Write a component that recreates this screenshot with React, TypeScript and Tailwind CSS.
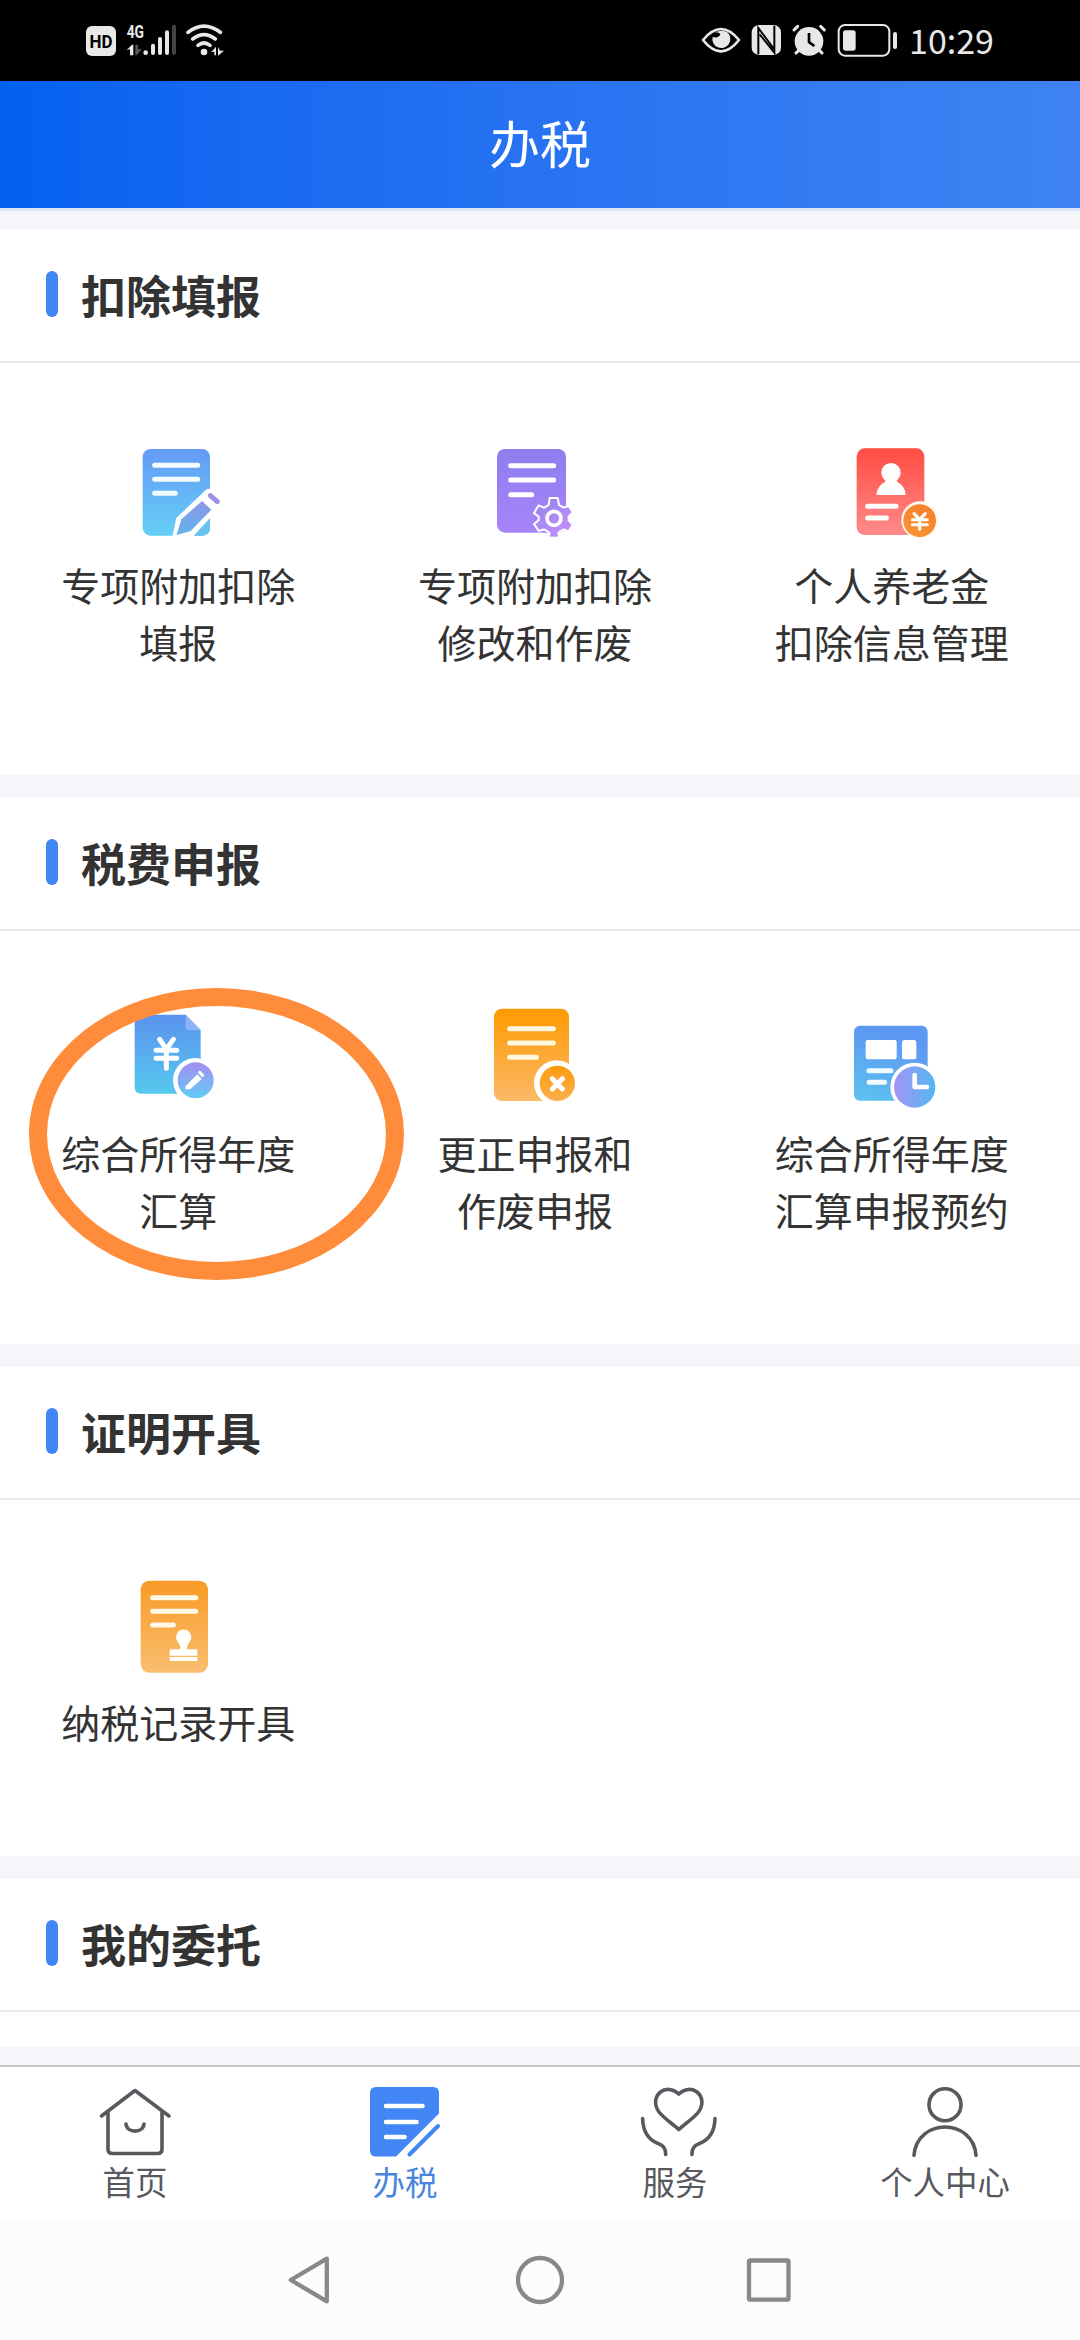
import clsx from "clsx";
import type { ReactNode } from "react";

type Item = {
	icon: ReactNode;
	lines: string[];
};

function Gradient({ id, from, to, x2 = 0, y2 = 1 }: { id: string; from: string; to: string; x2?: number; y2?: number }) {
	return (
		<linearGradient id={id} x1="0" y1="0" x2={x2} y2={y2}>
			<stop offset="0" stopColor={from} />
			<stop offset="1" stopColor={to} />
		</linearGradient>
	);
}

function ItemSvg({ viewBox, children }: { viewBox: string; children: ReactNode }) {
	return (
		<svg className="h-[120px] w-[120px]" viewBox={viewBox} fill="none" strokeLinecap="round" strokeLinejoin="round">
			{children}
		</svg>
	);
}

const FillIcon = () => (
	<ItemSvg viewBox="237 12 360 360">
		<defs>
			<Gradient id="fill-doc" from="#639af6" to="#66cff6" />
			<Gradient id="fill-pen" from="#8f95e6" to="#5fb4ee" />
		</defs>
		<rect x="311" y="57" width="202" height="260" rx="24" fill="url(#fill-doc)" />
		<path d="M347 106H476M347 148H476M347 190H409" stroke="#f4fdff" strokeWidth="15" />
		<path d="M400 320 L412 264 L500 180 Q510 172 519 180 L549 210 L549 232 L463 320 Z" fill="#fff" />
		<path d="M513 264 V300 Q510 314 490 317 H464 Z" fill="#64c4ee" />
		<path d="M489 213 L517 239 L455 303 L413 315 L427 268 Z" fill="url(#fill-pen)" />
		<path d="M514 197 L535 215" stroke="#9a94e0" strokeWidth="15" />
	</ItemSvg>
);

const ModifyIcon = () => (
	<ItemSvg viewBox="225 12 360 360">
		<defs>
			<Gradient id="mod-doc" from="#8d7eee" to="#a884fb" />
			<Gradient id="mod-gear" from="#8f86ee" to="#c08df8" x2={0.6} />
		</defs>
		<rect x="291" y="57" width="207" height="251" rx="24" fill="url(#mod-doc)" />
		<path d="M332 107H461M332 150H461M332 194H395" stroke="#fff" strokeWidth="15" />
		<path
			d="M449 204H473L477 225L491 233L506 228L518 247L506 259V272L518 284L506 304L491 298L477 306L473 318H451L446 306L432 298L416 303L402 282L416 271V260L402 249L416 226L432 233L446 225Z"
			fill="url(#mod-gear)"
			stroke="#fff"
			strokeWidth="6"
		/>
		<path d="M450 317H474" stroke="#b78df3" strokeWidth="6" strokeLinecap="butt" />
		<circle cx="462" cy="265" r="21" stroke="#fff" strokeWidth="11" />
	</ItemSvg>
);

const PensionIcon = () => (
	<ItemSvg viewBox="215 12 360 360">
		<defs>
			<Gradient id="pen-doc" from="#ff4c42" to="#ff8b89" />
			<Gradient id="pen-coin" from="#f6842c" to="#fb9f35" x2={-0.5} />
		</defs>
		<rect x="289" y="55" width="203" height="260" rx="24" fill="url(#pen-doc)" />
		<circle cx="392" cy="128" r="29" fill="#fff" />
		<path d="M376 148H408L411 156Q434 167 436 195H348Q351 167 374 156Z" fill="#fff" />
		<path d="M322 229H407M322 264H378" stroke="#fff" strokeWidth="15" />
		<circle cx="479" cy="270" r="56" fill="#fffaf0" />
		<circle cx="478" cy="272" r="49" fill="url(#pen-coin)" />
		<path d="M461 251L478 268L495 251M456 269H501M456 284H501M478 268V298" stroke="#fff" strokeWidth="9" />
	</ItemSvg>
);

const AnnualIcon = () => (
	<ItemSvg viewBox="295 96 360 360">
		<defs>
			<Gradient id="ann-doc" from="#5b93ef" to="#56c8ee" />
			<Gradient id="ann-badge" from="#a58df2" to="#5fccf4" />
		</defs>
		<path d="M365 134H498L543 180V371H365Q345 371 345 351V154Q345 134 365 134Z" fill="url(#ann-doc)" />
		<path d="M498 136L543 180H507Q498 180 498 171Z" fill="#8db4f6" />
		<path d="M420 208L440 238L461 208M409 241H471M409 265H471M440 238V295" stroke="#fff" strokeWidth="15" />
		<circle cx="527" cy="331" r="67" fill="#fff" />
		<circle cx="528" cy="331" r="54" fill="url(#ann-badge)" />
		<path d="M499 348L533 314L545 327L511 357L499 357Z" fill="#fff" stroke="#fff" strokeWidth="2" />
		<path d="M540 307L549 316" stroke="#fff" strokeWidth="9" />
	</ItemSvg>
);

const CorrectIcon = () => (
	<ItemSvg viewBox="135 36 360 360">
		<defs>
			<Gradient id="cor-doc" from="#ff9a02" to="#fcb968" />
			<Gradient id="cor-badge" from="#fd9a0c" to="#fbb14e" />
		</defs>
		<rect x="192" y="56" width="225" height="277" rx="24" fill="url(#cor-doc)" />
		<path d="M239 116H370M239 159H370M239 202H319" stroke="#fff8e0" strokeWidth="15" />
		<circle cx="380" cy="279" r="68" fill="#fff" />
		<circle cx="382" cy="280" r="53" fill="url(#cor-badge)" />
		<path d="M367 266L397 297M397 266L367 297" stroke="#fff" strokeWidth="15" />
	</ItemSvg>
);

const BookingIcon = () => (
	<ItemSvg viewBox="215 36 360 360">
		<defs>
			<Gradient id="book-doc" from="#5d99f2" to="#5cc6f0" x2={-0.3} />
			<Gradient id="book-clock" from="#a494f5" to="#52b7f2" x2={1} y2={0} />
		</defs>
		<rect x="281" y="107" width="221" height="225" rx="18" fill="url(#book-doc)" />
		<rect x="316" y="150" width="93" height="58" rx="6" fill="#fff" />
		<rect x="425" y="150" width="43" height="58" rx="8" fill="#fff" />
		<path d="M326 242H392M326 277H373" stroke="#f0fbff" strokeWidth="15" />
		<circle cx="463" cy="291" r="73" fill="#fff" />
		<circle cx="463" cy="291" r="62" fill="url(#book-clock)" />
		<path d="M463 255V291H500" stroke="#fff" strokeWidth="14" />
	</ItemSvg>
);

const RecordIcon = () => (
	<ItemSvg viewBox="295 93 360 360">
		<defs>
			<Gradient id="rec-doc" from="#f99a26" to="#f9be70" />
		</defs>
		<rect x="363" y="122" width="202" height="276" rx="26" fill="url(#rec-doc)" />
		<path d="M399 173H528M399 214H528M399 255H461" stroke="#fff8e6" strokeWidth="15" />
		<path d="M482 328Q484 318 476 308A23 23 0 1 1 508 308Q500 318 502 328H533V347H450V328Z" fill="#fff" />
		<rect x="450" y="351" width="83" height="12" fill="#fff" />
	</ItemSvg>
);

const sections: { title: string; className: string; circled?: boolean; items: Item[] }[] = [
	{
		title: "扣除填报",
		className: "h-[568px] border-b-[23px]",
		items: [
			{ icon: <FillIcon />, lines: ["专项附加扣除", "填报"] },
			{ icon: <ModifyIcon />, lines: ["专项附加扣除", "修改和作废"] },
			{ icon: <PensionIcon />, lines: ["个人养老金", "扣除信息管理"] },
		],
	},
	{
		title: "税费申报",
		className: "h-[569px] border-b-[23px]",
		circled: true,
		items: [
			{ icon: <AnnualIcon />, lines: ["综合所得年度", "汇算"] },
			{ icon: <CorrectIcon />, lines: ["更正申报和", "作废申报"] },
			{ icon: <BookingIcon />, lines: ["综合所得年度", "汇算申报预约"] },
		],
	},
	{
		title: "证明开具",
		className: "h-[512px] border-b-[23px]",
		items: [{ icon: <RecordIcon />, lines: ["纳税记录开具"] }],
	},
	{ title: "我的委托", className: "h-[186px] border-b-[18px]", items: [] },
];

function StatusBar() {
	return (
		<div className="flex h-[81px] shrink-0 items-start justify-between bg-black pt-5 pr-[86px] pl-20 text-[#e8e8e8]">
			<svg className="h-10 w-[150px]" viewBox="60 60 450 120" fill="currentColor" strokeLinecap="round">
				<rect x="78" y="78" width="90" height="90" rx="18" />
				<text x="123" y="144" fontSize="56" fontWeight="700" textAnchor="middle" textLength="69" lengthAdjust="spacingAndGlyphs" className="fill-black font-['Roboto',sans-serif]">
					HD
				</text>
				<text x="200" y="114" fontSize="55" fontWeight="700" textLength="52" lengthAdjust="spacingAndGlyphs" className="font-['Roboto',sans-serif]">
					4G
				</text>
				<path d="M200 150L216 134H220V166H210V148Z" />
				<path d="M226 134H234V148L246 146L230 166H226Z" fill="#555" />
				<circle cx="257" cy="158" r="7" />
				<path d="M279 137V159M300 117V159M321 97V159" stroke="currentColor" strokeWidth="12" />
				<path d="M342 80V159" stroke="#444" strokeWidth="12" />
				<g fill="none" stroke="currentColor" strokeWidth="11">
					<path d="M384 97Q432 60 481 97" />
					<path d="M398 117Q432 91 466 117" />
					<path d="M414 136Q432 122 450 136" />
				</g>
				<circle cx="432" cy="156" r="10" />
				<path d="M454 156L468 140V166H463V156ZM474 140L480 152H492L474 167Z" />
			</svg>
			<div className="flex items-start">
				<svg className="h-10 w-[50px]" viewBox="60 60 150 120" fill="none">
					<path d="M69 120Q123 54 177 120Q123 188 69 120Z" stroke="currentColor" strokeWidth="8" strokeLinejoin="round" />
					<path d="M104 97Q118 96 121 104Q112 117 98 110A27 27 0 1 0 142 97Q128 88 104 97Z" fill="currentColor" />
				</svg>
				<svg className="h-10 w-10" viewBox="210 60 120 120">
					<rect x="215" y="75" width="88" height="90" rx="22" fill="currentColor" />
					<path d="M235 163V84L281 146M239 103L283 158V77" fill="none" stroke="#000" strokeWidth="6" />
				</svg>
				<svg className="h-10 w-[45px]" viewBox="330 60 135 120" fill="none" stroke="currentColor" strokeLinecap="round">
					<circle cx="387" cy="124" r="43" fill="currentColor" stroke="none" />
					<path d="M342 90L353 79M433 90L422 79M356 152L348 159M419 152L426 159" strokeWidth="9" />
					<path d="M387 99V126L403 138" stroke="#000" strokeWidth="8" strokeLinecap="butt" />
				</svg>
				<svg className="h-10 w-[67px]" viewBox="465 60 201 120" fill="currentColor">
					<rect x="476" y="75" width="152" height="92" rx="19" fill="none" stroke="currentColor" strokeWidth="6" />
					<rect x="489" y="91" width="38" height="61" rx="8" />
					<rect x="639" y="96" width="12" height="51" rx="6" />
				</svg>
				<span className="mt-[-5px] ml-[7px] text-[34px] leading-[50px] whitespace-nowrap">10:29</span>
			</div>
		</div>
	);
}

function Section({ title, className, circled, items }: (typeof sections)[number]) {
	return (
		<section className={clsx("relative shrink-0 border-[#f5f6fa] bg-white", className)}>
			<div className="flex h-[133px] items-center border-b-2 border-[#ebebeb] pl-[46px]">
				<span className="mt-[-3px] h-[46px] w-3 rounded-full bg-[#4285f4]" />
				<h2 className="mt-[-2px] ml-[23px] text-[45px] leading-none font-bold">{title}</h2>
			</div>
			<div className="grid w-[1070px] grid-cols-3 pt-[71px]">
				{items.map((item) => (
					<div key={item.lines.join("")} className="flex flex-col items-center">
						{item.icon}
						<p className="mt-[2px] text-center text-[39px] leading-[57px]">
							{item.lines.map((line) => (
								<span key={line} className="block whitespace-nowrap">
									{line}
								</span>
							))}
						</p>
					</div>
				))}
			</div>
			{circled && (
				<div className="absolute top-[190px] left-[29px] h-[292px] w-[375px] rounded-[50%] border-[18px] border-[#ff8c3a]" />
			)}
		</section>
	);
}

function TabItem({ label, active, children }: { label: string; active?: boolean; children: ReactNode }) {
	return (
		<div className={clsx("flex flex-col items-center", active ? "text-[#4a86dc]" : "text-[#58585e]")}>
			<svg className="h-20 w-24" viewBox="0 0 96 80" fill="none" stroke="currentColor" strokeWidth="3.6" strokeLinecap="round" strokeLinejoin="round">
				{children}
			</svg>
			<span className="mt-[-1px] text-[32.4px] leading-[44px]">{label}</span>
		</div>
	);
}

function TabBar() {
	return (
		<nav className="grid h-[157px] shrink-0 grid-cols-4 border-t-2 border-[#c6c7ca] bg-white pt-[13px]">
			<TabItem label="首页">
				<path d="M14.5 36L48 10.5L82 36M21 32V69Q21 73.5 25.5 73.5H70.5Q75 73.5 75 69V32" />
				<path d="M39 44C40 53.5 56 53.5 57 44" />
			</TabItem>
			<TabItem label="办税" active>
				<path d="M19 7H76Q82 7 82 13V33.5L39 76.5H19Q13 76.5 13 70.5V13Q13 7 19 7Z" fill="#4285f4" stroke="none" />
				<path d="M29 26H65.5M29 42H59.5M29 57H47.5" stroke="#fff" strokeWidth="4.6" />
				<path d="M52.5 74.5L81 46" stroke="#4285f4" strokeWidth="4" />
			</TabItem>
			<TabItem label="服务">
				<path d="M51.8 14C46 8.5 38.5 8 33.5 12C27.5 17 27 25 32 32C37 38.5 46 44 51.8 49.5C57.5 44 66.5 38.5 71.5 32C76.5 25 76 17 70 12C65 8 57.5 8.5 51.8 14Z" />
				<path d="M15.6 38.5C16 52 22 60 31 63.5Q39 66 38.7 74.5M88 38.5C87.6 52 81.6 60 72.6 63.5Q64.600 66 64.9 74.5" />
			</TabItem>
			<TabItem label="个人中心">
				<circle cx="48" cy="24.7" r="16" />
				<path d="M17 75.3C20 37.5 76 37.5 79 75.3" />
			</TabItem>
		</nav>
	);
}

function SystemNav() {
	return (
		<div className="flex grow items-start bg-[#fcfcfc] pt-[28px] pl-[279px]">
			<svg className="h-[60px] w-[520px]" viewBox="279 2250 520 60" fill="none" stroke="#888" strokeWidth="4.3" strokeLinejoin="round">
				<path d="M290.8 2280L326.8 2258.7V2301.3Z" />
				<circle cx="540" cy="2280" r="22" />
				<rect x="749" y="2260.5" width="39.5" height="39.2" rx="1.5" />
			</svg>
		</div>
	);
}

export default function App() {
	return (
		<div className="flex h-[2340px] w-[1080px] flex-col overflow-hidden bg-white font-['Noto_Sans_CJK_SC',sans-serif] text-[#333]">
			<StatusBar />
			<header className="flex h-[127px] shrink-0 items-center justify-center bg-linear-to-r from-[#0361f0] to-[#3f83f3] pb-[5px] text-[51px] leading-none text-white">
				办税
			</header>
			<div className="h-[22px] shrink-0 border-t-3 border-[#dce7fa] bg-[#f5f6fa]" />
			{sections.map((section) => (
				<Section key={section.title} {...section} />
			))}
			<TabBar />
			<SystemNav />
		</div>
	);
}
